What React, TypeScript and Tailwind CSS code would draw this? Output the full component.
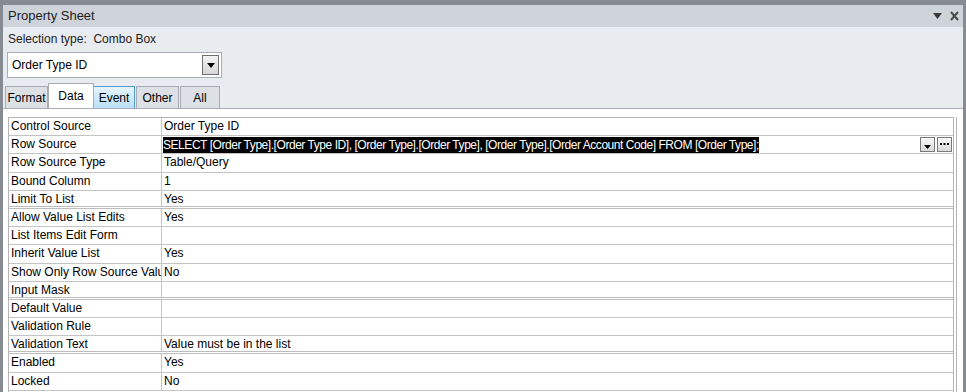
import React from 'react'

const rows: { label: string; value: string; sep?: boolean }[] = [
  { label: 'Control Source', value: 'Order Type ID' },
  { label: 'Row Source', value: '' },
  { label: 'Row Source Type', value: 'Table/Query' },
  { label: 'Bound Column', value: '1' },
  { label: 'Limit To List', value: 'Yes', sep: true },
  { label: 'Allow Value List Edits', value: 'Yes' },
  { label: 'List Items Edit Form', value: '' },
  { label: 'Inherit Value List', value: 'Yes' },
  { label: 'Show Only Row Source Values', value: 'No' },
  { label: 'Input Mask', value: '', sep: true },
  { label: 'Default Value', value: '' },
  { label: 'Validation Rule', value: '' },
  { label: 'Validation Text', value: 'Value must be in the list', sep: true },
  { label: 'Enabled', value: 'Yes' },
  { label: 'Locked', value: 'No' },
]

const sql =
  'SELECT [Order Type].[Order Type ID], [Order Type].[Order Type], [Order Type].[Order Account Code] FROM [Order Type];'

const tabs = ['Format', 'Data', 'Event', 'Other', 'All']

const App = () => {
  return (
    <div
      className="w-[966px] h-[392px] overflow-hidden bg-[#878b93] pt-[5px] pl-[3px] pr-[3px] text-[12px] text-black"
      style={{ fontFamily: '"Liberation Sans", Arial, sans-serif' }}
    >
      <div className="h-full bg-[#e8ebef] flex flex-col">
        {/* Title bar */}
        <div className="h-[22px] bg-[#cfd4db] flex items-center justify-between pl-[5px] pr-[4px]">
          <span className="text-[13px] text-[#1e1e1e]">Property Sheet</span>
          <div className="flex items-center gap-[8px]">
            <svg width="9" height="6" viewBox="0 0 9 6">
              <path d="M0 0 H9 L4.5 6 Z" fill="#3a3a3a" />
            </svg>
            <svg width="9" height="10" viewBox="0 0 9 10">
              <path d="M1 1 L8 9 M8 1 L1 9" stroke="#4a4a4a" strokeWidth="2" />
            </svg>
          </div>
        </div>

        <div className="pl-[5px] pt-[3px] h-[20px] text-[#1e1e1e]">Selection type:&nbsp; Combo Box</div>

        {/* Combo */}
        <div className="ml-[4px] mt-[5px] w-[215px] h-[26px] bg-white border border-[#a9adb3] flex items-center justify-between pl-[4px] pr-[2px]">
          <span>Order Type ID</span>
          <div className="w-[17px] h-[20px] border border-[#6f6f6f] bg-gradient-to-b from-[#f4f4f4] to-[#d6d6d6] flex items-center justify-center">
            <svg width="8" height="5" viewBox="0 0 8 5">
              <path d="M0 0 H8 L4 5 Z" fill="#000" />
            </svg>
          </div>
        </div>

        {/* Tabs */}
        <div className="mt-[5px] pl-[2px] flex items-end h-[25px]">
          {tabs.map((t) => {
            const active = t === 'Data'
            const hover = t === 'Event'
            return (
              <div
                key={t}
                className={
                  active
                    ? 'h-[25px] w-[46px] bg-white border border-b-0 border-[#a9adb3] flex items-start justify-center pt-[3px] -mx-[1px] z-10 relative'
                    : hover
                      ? 'h-[22px] w-[42px] bg-gradient-to-b from-[#e6f4fc] to-[#b9e0f7] border border-b-0 border-[#4f9ccc] flex items-center justify-center mr-[1px]'
                      : t === 'All'
                        ? 'h-[22px] w-[40px] bg-[#dde1e6] border border-b-0 border-[#a9adb3] flex items-center justify-center mr-[1px]'
                        : 'h-[22px] w-[43px] bg-[#dde1e6] border border-b-0 border-[#a9adb3] flex items-center justify-center mr-[1px]'
                }
              >
                {t}
              </div>
            )
          })}
        </div>

        {/* Grid */}
        <div className="flex-1 bg-white border-t border-[#a9adb3] pl-[5px] pt-[8px] pr-[6px] flex">
          <div className="flex-1 border-l border-t border-r border-[#b5b5b5]">
            {rows.map((r) => (
              <div
                key={r.label}
                className={
                  r.sep
                    ? 'flex h-[18.2px] border-b-[3px] border-double border-[#bdbdbd]'
                    : 'flex h-[18.2px] border-b border-[#c4c4c4]'
                }
              >
                <div className="w-[153px] shrink-0 border-r border-[#c4c4c4] pl-[2px] leading-[17px] whitespace-nowrap overflow-hidden">
                  {r.label}
                </div>
                {r.label === 'Row Source' ? (
                  <div className="flex-1 flex items-center justify-between pl-[1px] pr-[1px]">
                    <span className="bg-black text-white leading-[16px] whitespace-nowrap tracking-[-0.45px]">{sql}</span>
                    <div className="flex gap-[2px]">
                      <div className="w-[15px] h-[15px] border border-[#7a7a7a] bg-gradient-to-b from-[#fafafa] to-[#d9d9d9] flex items-end justify-center pb-[2px]">
                        <svg width="7" height="4" viewBox="0 0 7 4">
                          <path d="M0 0 H7 L3.5 4 Z" fill="#000" />
                        </svg>
                      </div>
                      <div className="w-[15px] h-[15px] border border-[#7a7a7a] bg-gradient-to-b from-[#fafafa] to-[#d9d9d9] flex items-center justify-center">
                        <svg width="9" height="3" viewBox="0 0 9 3">
                          <rect x="0" y="0" width="2" height="2" fill="#000" />
                          <rect x="3.5" y="0" width="2" height="2" fill="#000" />
                          <rect x="7" y="0" width="2" height="2" fill="#000" />
                        </svg>
                      </div>
                    </div>
                  </div>
                ) : (
                  <div className="flex-1 pl-[2px] leading-[17px] whitespace-nowrap">{r.value}</div>
                )}
              </div>
            ))}
          </div>
          <div className="w-[1px] ml-[2px] bg-[#b5b5b5]" />
        </div>
      </div>
    </div>
  )
}

export default App
